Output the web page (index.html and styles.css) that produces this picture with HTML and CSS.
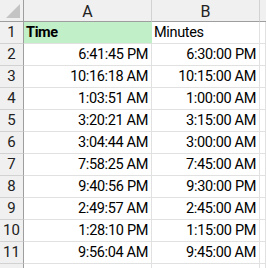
FILE: index.html
```html
<!DOCTYPE html>
<html>
<head>
<meta charset="utf-8">
<link rel="stylesheet" href="styles.css">
</head>
<body>
<div class="sheet">
  <div class="corner"><span class="tri"></span></div>
  <div class="colhdr">A</div>
  <div class="colhdr">B</div>
  <div class="colhdr last"></div>

  <div class="rowhdr">1</div>
  <div class="cell head">Time</div>
  <div class="cell left">Minutes</div>
  <div class="cell"></div>

  <div class="rowhdr">2</div><div class="cell">6:41:45 PM</div><div class="cell">6:30:00 PM</div><div class="cell"></div>
  <div class="rowhdr">3</div><div class="cell">10:16:18 AM</div><div class="cell">10:15:00 AM</div><div class="cell"></div>
  <div class="rowhdr">4</div><div class="cell">1:03:51 AM</div><div class="cell">1:00:00 AM</div><div class="cell"></div>
  <div class="rowhdr">5</div><div class="cell">3:20:21 AM</div><div class="cell">3:15:00 AM</div><div class="cell"></div>
  <div class="rowhdr">6</div><div class="cell">3:04:44 AM</div><div class="cell">3:00:00 AM</div><div class="cell"></div>
  <div class="rowhdr">7</div><div class="cell">7:58:25 AM</div><div class="cell">7:45:00 AM</div><div class="cell"></div>
  <div class="rowhdr">8</div><div class="cell">9:40:56 PM</div><div class="cell">9:30:00 PM</div><div class="cell"></div>
  <div class="rowhdr">9</div><div class="cell">2:49:57 AM</div><div class="cell">2:45:00 AM</div><div class="cell"></div>
  <div class="rowhdr">10</div><div class="cell">1:28:10 PM</div><div class="cell">1:15:00 PM</div><div class="cell"></div>
  <div class="rowhdr">11</div><div class="cell">9:56:04 AM</div><div class="cell">9:45:00 AM</div><div class="cell"></div>
  <div class="rowhdr"></div><div class="cell"></div><div class="cell"></div><div class="cell"></div>
</div>
</body>
</html>
```
FILE: styles.css
```css
html, body {
  margin: 0;
  padding: 0;
  background: #ffffff;
  overflow: hidden;
}
.sheet {
  display: grid;
  grid-template-columns: 24px 128px 108px 1fr;
  grid-auto-rows: 22px;
  font-family: Roboto, "Liberation Sans", sans-serif;
  font-size: 14.5px;
  color: #000;
  width: 266px;
  height: 268px;
  overflow: hidden;
}
.corner, .colhdr, .rowhdr {
  background: #f0f0f0;
  color: #222;
  box-sizing: border-box;
}
.corner {
  position: relative;
  border-right: 1px solid #9e9e9e;
  border-bottom: 1px solid #9e9e9e;
}
.tri {
  position: absolute;
  right: 3px;
  bottom: 3px;
  width: 0;
  height: 0;
  border-left: 14px solid transparent;
  border-bottom: 14px solid #c4c4c4;
}
.colhdr {
  border-right: 1px solid #d2d2d2;
  border-bottom: 1px solid #9e9e9e;
  display: flex;
  align-items: center;
  justify-content: center;
  font-size: 16px;
  padding-top: 1px;
}
.colhdr.last { border-right: none; }
.rowhdr {
  border-right: 1px solid #9e9e9e;
  border-bottom: 1px solid #d2d2d2;
  display: flex;
  align-items: flex-end;
  justify-content: center;
  padding-bottom: 2px;
  font-size: 15px;
}
.cell {
  box-sizing: border-box;
  border-right: 1px solid #e1e1e1;
  border-bottom: 1px solid #e1e1e1;
  display: flex;
  align-items: flex-end;
  justify-content: flex-end;
  padding: 0 3px 2px 2px;
  white-space: nowrap;
  letter-spacing: -0.35px;
}
.cell.head {
  background: #c1f0c8;
  font-weight: bold;
  justify-content: flex-start;
  border-right-color: #c1f0c8;
}
.cell.left { justify-content: flex-start; }
```
